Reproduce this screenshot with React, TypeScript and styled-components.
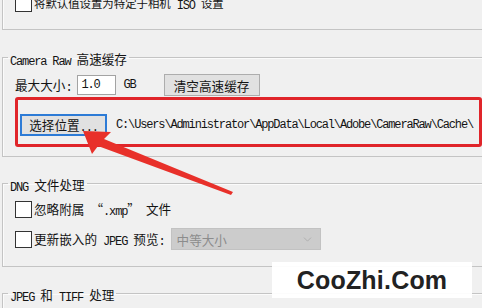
import React from 'react'
import styled, { createGlobalStyle } from 'styled-components'
import { ChevronDown } from 'lucide-react'

const GlobalStyle = createGlobalStyle`
  html, body {
    margin: 0;
    padding: 0;
    background: #f0f0f0;
  }
  body {
    width: 482px;
    height: 308px;
    overflow: hidden;
    color: #141414;
    font-family: "Noto Sans CJK SC", "Liberation Sans", sans-serif;
  }
`

const CJK_RUN = /([\u2000-\u206f\u3000-\u9fff\uff00-\uffef]+)/

const Label = styled.span<{ $cjk: number }>`
  white-space: pre;
  --cjk-size: ${(p) => p.$cjk}px;
`

const Cjk = styled.span`
  font-family: "Noto Sans CJK SC", sans-serif;
  font-size: var(--cjk-size, 12.6px);
`

const Latin = styled.span`
  font-family: "Liberation Mono", monospace;
  font-size: 12px;
  letter-spacing: -1.15px;
  vertical-align: -0.5px;
`

// splits a label into CJK and half-width runs, like the old SimSun dialog font
const Mixed = ({ text, cjk = 12.6 }: { text: string; cjk?: number }) => (
  <Label $cjk={cjk}>
    {text.split(CJK_RUN).map((part, i) =>
      !part ? null : CJK_RUN.test(part) ? (
        <Cjk key={i}>{part}</Cjk>
      ) : (
        <Latin key={i}>{part}</Latin>
      )
    )}
  </Label>
)

const Page = styled.div`
  position: relative;
  width: 482px;
  height: 308px;
  overflow: hidden;
  display: flex;
  flex-direction: column;
`

const Group = styled.fieldset<{ $top: number; $padTop: number; $padBottom: number }>`
  margin: ${(p) => p.$top}px -30px 0 2px;
  padding: ${(p) => p.$padTop}px 0 ${(p) => p.$padBottom}px 12px;
  border: 1px solid #c4c4c4;
  box-shadow: inset 1px 1px 0 #fbfbfb;
  min-width: 0;
  display: flex;
  flex-direction: column;
  align-items: flex-start;
`

const Legend = styled.legend`
  margin-left: -7px;
  padding: 0 2px;
  line-height: 14px;
  height: 14px;
  white-space: nowrap;
`

const Row = styled.div<{ $gap?: number; $mt?: number }>`
  display: flex;
  align-items: center;
  gap: ${(p) => p.$gap ?? 0}px;
  margin-top: ${(p) => p.$mt ?? 0}px;
  height: 22px;
  white-space: nowrap;
  line-height: 16px;
`

const CheckRow = styled(Row)`
  height: 17px;
  gap: 2px;
`

const Box = styled.span`
  width: 15px;
  height: 15px;
  background: #fff;
  border: 1px solid #333;
  flex: none;
`

const SizeInput = styled.div`
  width: 34px;
  height: 18px;
  background: #fff;
  border: 1px solid #a3a3a3;
  display: flex;
  align-items: center;
  padding-left: 3px;
  margin: 0 7px 0 6px;
`

const Button = styled.div<{ $focused?: boolean; $width: number }>`
  width: ${(p) => p.$width}px;
  height: 22px;
  box-sizing: border-box;
  background: #e1e1e1;
  border: ${(p) => (p.$focused ? '2px solid #2d7bd6' : '1px solid #adadad')};
  display: flex;
  align-items: center;
  justify-content: center;
`

const Path = styled(Latin)`
  margin-left: 9px;
`

const Select = styled.div`
  width: 150px;
  height: 22px;
  box-sizing: border-box;
  background: #cccccc;
  border: 1px solid #c2c2c2;
  color: #8c8c8c;
  display: flex;
  align-items: center;
  justify-content: space-between;
  padding: 0 6px 0 5px;
  margin-left: 4px;
`

const RedFrame = styled.div`
  position: absolute;
  left: 15px;
  top: 97px;
  width: 461px;
  height: 44px;
  border: 3px solid #e0252a;
  border-radius: 3px;
  pointer-events: none;
`

const Arrow = styled.svg`
  position: absolute;
  left: 0;
  top: 0;
  pointer-events: none;
`

const Watermark = styled.div`
  position: absolute;
  left: 272px;
  top: 262px;
  width: 200px;
  height: 36px;
  background: rgba(255, 255, 255, 0.94);
  display: flex;
  align-items: center;
  justify-content: center;
  font-family: "Liberation Sans", Arial, sans-serif;
  font-weight: 700;
  font-size: 25px;
  color: #222;
  letter-spacing: 0.2px;
`

export default function App() {
  return (
    <>
      <GlobalStyle />
      <Page>
        <Group $top={-19} $padTop={13} $padBottom={17}>
          <CheckRow>
            <Box />
            <Mixed text="将默认值设置为特定于相机 ISO 设置" cjk={11.4} />
          </CheckRow>
        </Group>

        <Group $top={20} $padTop={10} $padBottom={20}>
          <Legend>
            <Mixed text="Camera Raw 高速缓存" />
          </Legend>
          <Row>
            <Mixed text="最大大小:" />
            <SizeInput>
              <Latin>1.0</Latin>
            </SizeInput>
            <Latin>GB</Latin>
            <Button $width={96} style={{ marginLeft: 28 }}>
              <Mixed text="清空高速缓存" />
            </Button>
          </Row>
          <Row $mt={18}>
            <Button $focused $width={87} style={{ marginLeft: 5 }}>
              <Mixed text="选择位置..." />
            </Button>
            <Path>C:\Users\Administrator\AppData\Local\Adobe\CameraRaw\Cache\</Path>
          </Row>
        </Group>

        <Group $top={19} $padTop={11} $padBottom={16}>
          <Legend>
            <Mixed text="DNG 文件处理" />
          </Legend>
          <CheckRow>
            <Box />
            <Mixed text="忽略附属 “.xmp” 文件" />
          </CheckRow>
          <Row $mt={10} $gap={2}>
            <Box />
            <Mixed text="更新嵌入的 JPEG 预览:" />
            <Select>
              <Mixed text="中等大小" />
              <ChevronDown size={13} color="#a9a9a9" strokeWidth={1.5} />
            </Select>
          </Row>
        </Group>

        <Group $top={19} $padTop={10} $padBottom={20}>
          <Legend>
            <Mixed text="JPEG 和 TIFF 处理" />
          </Legend>
        </Group>

        <RedFrame />
        <Arrow width={482} height={308} viewBox="0 0 482 308">
          <polygon
            points="83,131 111,132 104,139 233,192 231,195 98,146 92,154"
            fill="#e8302a"
          />
        </Arrow>
        <Watermark>CooZhi.Com</Watermark>
      </Page>
    </>
  )
}
